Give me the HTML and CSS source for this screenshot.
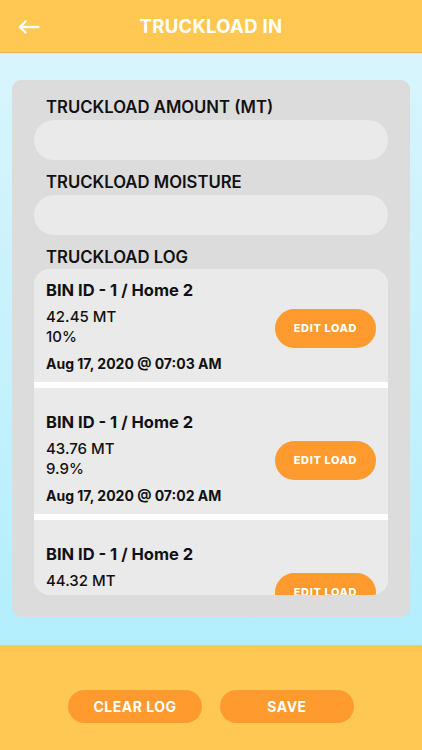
FILE: index.html
```html
<!DOCTYPE html>
<html lang="en">
<head>
    <meta charset="UTF-8">
    <meta name="viewport" content="width=device-width, initial-scale=1.0">
    <title>Truckload In</title>
    <link rel="stylesheet" href="styles.css">
</head>
<body>
    <header class="topbar">
        <button class="back-btn" aria-label="Back">
            <svg width="22" height="14" viewBox="0 0 22 14" fill="none" stroke="#fff" stroke-width="2.4" stroke-linecap="round" stroke-linejoin="round">
                <path d="M20.5 7H2"/>
                <path d="M7.5 1.5L2 7l5.5 5.5"/>
            </svg>
        </button>
        <h1>TRUCKLOAD IN</h1>
    </header>
    <main class="content">
        <section class="panel">
            <div class="field">
                <label for="amount">TRUCKLOAD AMOUNT (MT)</label>
                <input type="text" id="amount" />
            </div>
            <div class="field">
                <label for="moisture">TRUCKLOAD MOISTURE</label>
                <input type="text" id="moisture" />
            </div>
            <div class="field log-field">
                <label>TRUCKLOAD LOG</label>
                <div class="log">
                    <div class="log-inner">
                        <div class="load">
                            <div class="load-info">
                                <h3>BIN ID - 1 / Home 2</h3>
                                <p class="amount">42.45 MT<br>10%</p>
                                <p class="date">Aug 17, 2020 @ 07:03 AM</p>
                            </div>
                            <button class="edit-btn">EDIT LOAD</button>
                        </div>
                        <div class="load">
                            <div class="load-info">
                                <h3>BIN ID - 1 / Home 2</h3>
                                <p class="amount">43.76 MT<br>9.9%</p>
                                <p class="date">Aug 17, 2020 @ 07:02 AM</p>
                            </div>
                            <button class="edit-btn">EDIT LOAD</button>
                        </div>
                        <div class="load">
                            <div class="load-info">
                                <h3>BIN ID - 1 / Home 2</h3>
                                <p class="amount">44.32 MT<br>10.2%</p>
                                <p class="date">Aug 17, 2020 @ 07:00 AM</p>
                            </div>
                            <button class="edit-btn">EDIT LOAD</button>
                        </div>
                    </div>
                </div>
            </div>
        </section>
    </main>
    <footer class="bottombar">
        <button class="action-btn">CLEAR LOG</button>
        <button class="action-btn">SAVE</button>
    </footer>
</body>
</html>
```

FILE: styles.css
```css
* {
    box-sizing: border-box;
}
body {
    font-family: Inter, "Noto Sans", sans-serif;
    margin: 0;
    padding: 0;
    height: 750px;
    display: flex;
    flex-direction: column;
    color: #111;
}
.topbar {
    flex-shrink: 0;
    height: 53px;
    background-color: #fec853;
    border-bottom: 1px solid #e8b64a;
    display: flex;
    align-items: center;
    justify-content: center;
    position: relative;
}
.topbar h1 {
    margin: 0;
    color: white;
    font-size: 18.5px;
    font-weight: 700;
    letter-spacing: 0.3px;
}
.back-btn {
    position: absolute;
    left: 18px;
    top: 20px;
    padding: 0;
    border: none;
    background: none;
    line-height: 0;
}
.content {
    flex: 1;
    min-height: 0;
    background: linear-gradient(#d8f5fd, #b3eefc);
    padding: 27px 12px 28px;
    display: flex;
}
.panel {
    flex: 1;
    min-height: 0;
    background: #dcdcdc;
    border-radius: 9px;
    padding: 17px 22px 22px;
    display: flex;
    flex-direction: column;
}
.field {
    margin-bottom: 12px;
}
.field label {
    display: block;
    padding-left: 12px;
    font-size: 16.7px;
    font-weight: 600;
    line-height: 20px;
    margin-bottom: 3px;
}
.field input {
    display: block;
    width: 100%;
    height: 40px;
    border: none;
    border-radius: 20px;
    background: #eaeaea;
    outline: none;
}
.log-field {
    flex: 1;
    min-height: 0;
    margin-bottom: 0;
    display: flex;
    flex-direction: column;
}
.log-field label {
    margin-bottom: 2px;
}
.log {
    flex: 1;
    min-height: 0;
    border-radius: 16px;
    overflow: hidden;
    background: #eaeaea;
}
.log-inner {
    margin-top: -13px;
}
.load {
    display: flex;
    align-items: center;
    justify-content: space-between;
    background: #eaeaea;
    padding: 24px 12px 9px;
    border-bottom: 6px solid white;
}
.load h3 {
    margin: 0;
    font-size: 16.5px;
    font-weight: 700;
    line-height: 20px;
}
.load .amount {
    margin: 7px 0 0;
    font-size: 15px;
    font-weight: 500;
    line-height: 20px;
}
.load .date {
    margin: 8px 0 0;
    font-size: 14px;
    font-weight: 700;
    line-height: 18px;
}
.edit-btn {
    width: 101px;
    height: 39px;
    margin-top: 3px;
    border: none;
    border-radius: 20px;
    background: #fe9a2e;
    color: white;
    font-family: inherit;
    font-size: 11px;
    font-weight: 800;
    letter-spacing: 0.6px;
}
.bottombar {
    flex-shrink: 0;
    height: 105px;
    background-color: #fec853;
    display: flex;
    justify-content: center;
    gap: 18px;
    padding-top: 45px;
}
.action-btn {
    width: 134px;
    height: 33px;
    border: none;
    border-radius: 17px;
    background: #fe9a2e;
    color: white;
    font-family: inherit;
    font-size: 14px;
    font-weight: 700;
    letter-spacing: 0.5px;
}
```
